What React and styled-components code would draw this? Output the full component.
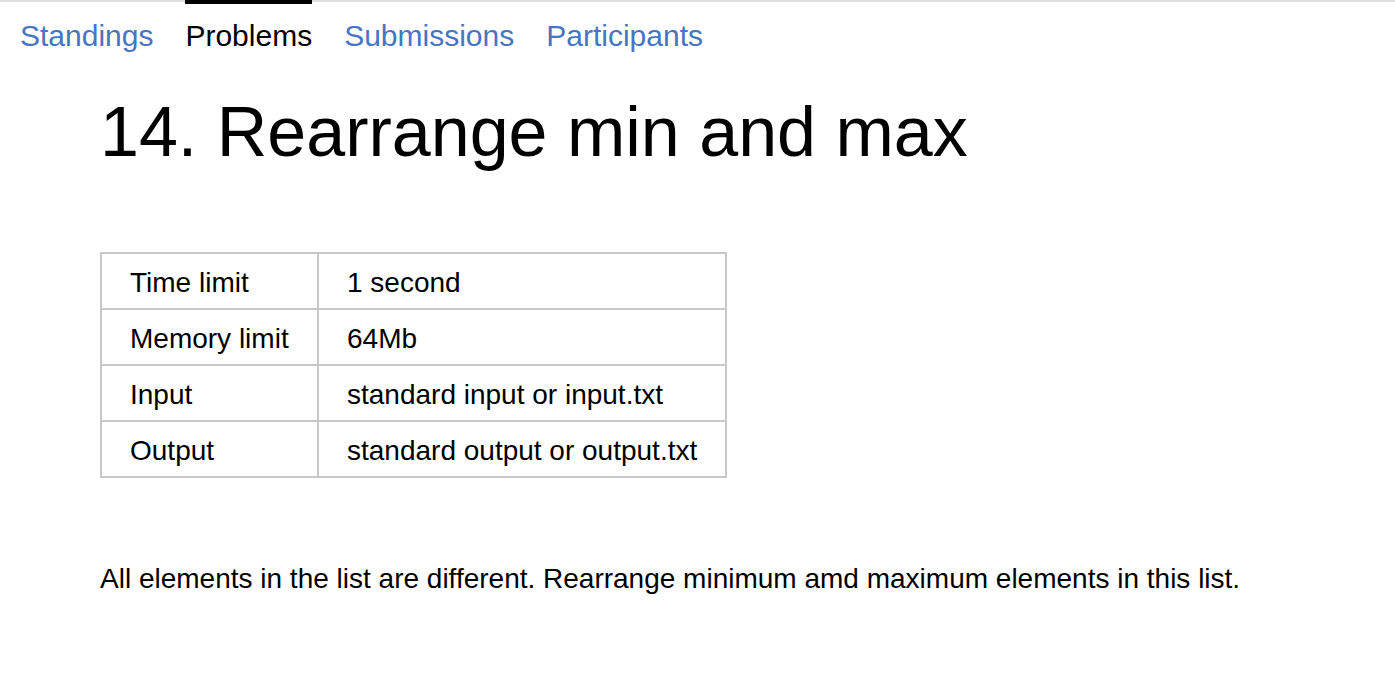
import React from "react";
import styled, { createGlobalStyle } from "styled-components";

const GlobalStyle = createGlobalStyle`
  body {
    margin: 0;
    background: #ffffff;
    font-family: "Liberation Sans", Arial, sans-serif;
    color: #000000;
  }
`;

const TabBar = styled.nav`
  display: flex;
  gap: 32px;
  padding-left: 20px;
  border-top: 2px solid #dedede;
`;

const Tab = styled.a`
  display: block;
  margin-top: -2px;
  padding-top: 15px;
  border-top: 4px solid ${(p) => (p.$active ? "#000000" : "transparent")};
  font-size: 30px;
  line-height: 34px;
  color: ${(p) => (p.$active ? "#000000" : "#4775c2")};
  text-decoration: none;
  cursor: pointer;
`;

const Content = styled.main`
  padding-left: 100px;
`;

const Title = styled.h1`
  margin: 40px 0 0;
  font-size: 70px;
  line-height: 78px;
  font-weight: normal;
`;

const LimitsTable = styled.table`
  margin-top: 81px;
  border-collapse: collapse;
  font-size: 28px;
`;

const Cell = styled.td`
  height: 56px;
  padding: 3px 28px 0;
  border: 2px solid #c8c8c8;
  width: ${(p) => p.$width}px;
  box-sizing: border-box;
  vertical-align: middle;
  white-space: nowrap;
`;

const Statement = styled.p`
  margin: 85px 0 0;
  font-size: 28px;
  line-height: 32px;
`;

const tabs = ["Standings", "Problems", "Submissions", "Participants"];

const limits = [
  ["Time limit", "1 second"],
  ["Memory limit", "64Mb"],
  ["Input", "standard input or input.txt"],
  ["Output", "standard output or output.txt"],
];

export default function App() {
  return (
    <>
      <GlobalStyle />
      <TabBar>
        {tabs.map((t) => (
          <Tab key={t} $active={t === "Problems"}>
            {t}
          </Tab>
        ))}
      </TabBar>
      <Content>
        <Title>14. Rearrange min and max</Title>
        <LimitsTable>
          <tbody>
            {limits.map(([name, value]) => (
              <tr key={name}>
                <Cell $width={217}>{name}</Cell>
                <Cell $width={408}>{value}</Cell>
              </tr>
            ))}
          </tbody>
        </LimitsTable>
        <Statement>
          All elements in the list are different. Rearrange minimum amd maximum
          elements in this list.
        </Statement>
      </Content>
    </>
  );
}
